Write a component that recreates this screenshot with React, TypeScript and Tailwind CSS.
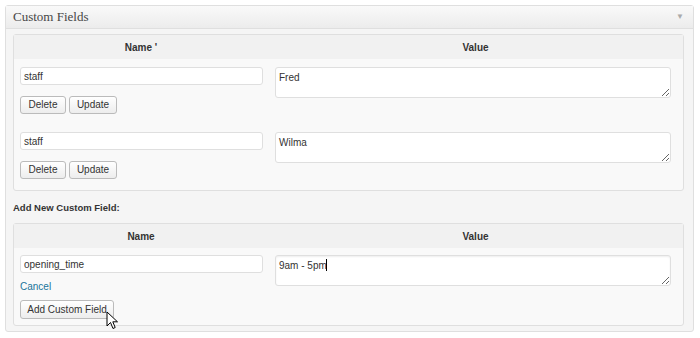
import React from 'react';

const FONT = { fontFamily: '"Liberation Sans", Arial, sans-serif' };

const inputCls =
  'block h-[18px] w-[243px] rounded-[3px] border border-[#dfdfdf] bg-white px-[3px] text-[10px] leading-[16px] text-[#333] outline-none';

const textareaCls =
  'block h-[31px] w-[396px] resize-y rounded-[3px] border border-[#dfdfdf] bg-white px-[3px] pt-[3px] text-[10px] leading-[13px] text-[#333] outline-none';

const btnCls =
  'h-[18px] whitespace-nowrap rounded-[3px] border border-[#bbb] bg-gradient-to-b from-white to-[#ededed] px-[4px] text-[10px] leading-[16px] text-[#333]';

function HeaderRow({ name }: { name: string }) {
  return (
    <div className="flex h-[24px] items-center bg-[#f1f1f1] text-[10px] font-bold text-[#333]">
      <div className="w-[254px] text-center">{name}</div>
      <div className="flex-1 text-center">Value</div>
    </div>
  );
}

function MetaRow({ name, value, last }: { name: string; value: string; last?: boolean }) {
  return (
    <div className={`flex pt-[8px] ${last ? 'pb-[11px]' : 'pb-[10px]'}`}>
      <div className="w-[254px] pl-[6px]">
        <input className={inputCls} readOnly value={name} />
        <div className="mt-[11px] flex gap-[3px]">
          <button className={`${btnCls} w-[46px]`} type="button">Delete</button>
          <button className={`${btnCls} w-[48px]`} type="button">Update</button>
        </div>
      </div>
      <div className="flex-1 pl-[7px]">
        <textarea className={textareaCls} readOnly value={value} />
      </div>
    </div>
  );
}

function Cursor() {
  return (
    <svg className="absolute left-[106px] top-[311px]" width="13" height="19" viewBox="0 0 13 19">
      <path
        d="M1 1 L1 15 L4.5 11.5 L7 17.5 L9.2 16.5 L6.8 10.8 L11.5 10.8 Z"
        fill="#fff"
        stroke="#000"
        strokeWidth="1"
      />
    </svg>
  );
}

export default function App() {
  return (
    <div className="relative h-[338px] w-[700px] bg-white pl-[5px] pt-[5px]" style={FONT}>
      <div className="h-[327px] w-[689px] rounded-[3px] border border-[#dfdfdf] bg-[#f5f5f5]">
        <div className="flex h-[23px] items-center justify-between border-b border-[#dfdfdf] bg-gradient-to-b from-[#f9f9f9] to-[#ececec] pl-[7px] pr-[9px]">
          <h3
            className="text-[13px] font-normal text-[#464646]"
            style={{ fontFamily: '"Liberation Serif", Georgia, serif' }}
          >
            Custom Fields
          </h3>
          <span className="text-[8px] text-[#aaa]">▼</span>
        </div>

        <div className="pl-[7px] pr-[9px] pt-[5px]">
          <div className="rounded-[3px] border border-[#dfdfdf] bg-[#f9f9f9]">
            <HeaderRow name="Name '" />
            <MetaRow name="staff" value="Fred" />
            <MetaRow name="staff" value="Wilma" last />
          </div>

          <p className="mb-[9px] mt-[10px] text-[9.5px] font-bold leading-[13px] text-[#333]">
            Add New Custom Field:
          </p>

          <div className="rounded-[3px] border border-[#dfdfdf] bg-[#f9f9f9]">
            <HeaderRow name="Name" />
            <div className="flex pb-[5px] pt-[7px]">
              <div className="w-[254px] pl-[6px]">
                <input className={inputCls} readOnly value="opening_time" />
                <a className="mt-[7px] block text-[10px] leading-[13px] text-[#21759b]" href="#">
                  Cancel
                </a>
                <button className={`${btnCls} mt-[7px] h-[19px] w-[94px]`} type="button">
                  Add Custom Field
                </button>
              </div>
              <div className="relative flex-1 pl-[7px]">
                <textarea
                  className={`${textareaCls} border-[#aaa] shadow-[inset_0_1px_2px_rgba(0,0,0,0.07)]`}
                  readOnly
                  value="9am - 5pm"
                />
                <span className="absolute left-[58px] top-[4px] h-[12px] w-px bg-black" />
              </div>
            </div>
          </div>
        </div>
      </div>
      <Cursor />
    </div>
  );
}
